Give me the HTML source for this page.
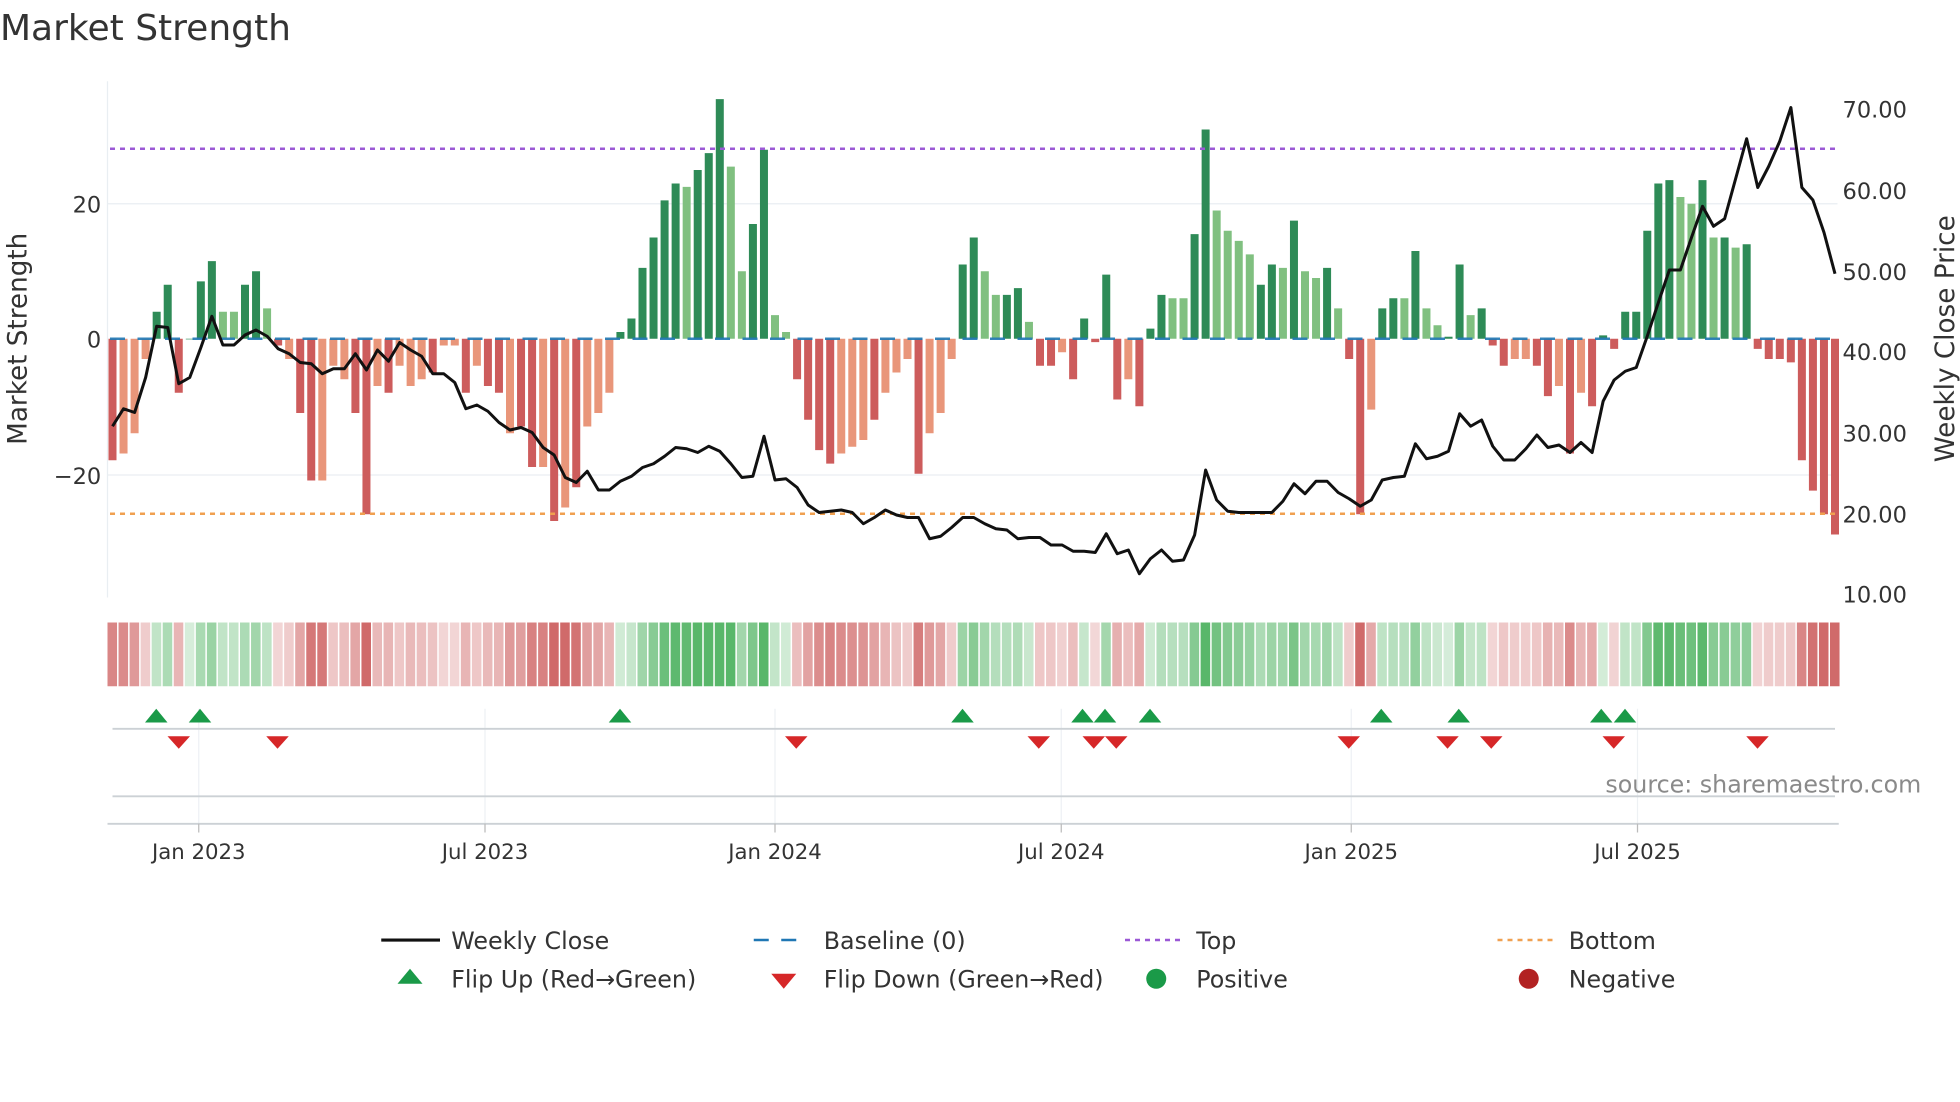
<!DOCTYPE html>
<html><head><meta charset="utf-8"><style>
html,body{margin:0;padding:0;background:#fff;width:1960px;height:1102px;overflow:hidden}
svg{display:block}
text{font-family:"DejaVu Sans","Liberation Sans",sans-serif;fill:#333}
</style></head><body>
<svg id="s" width="1960" height="1102" viewBox="0 0 1568 881.6" xmlns="http://www.w3.org/2000/svg">
<text x="0" y="32" font-size="28.8">Market Strength</text>
<g stroke="#e9eef2" stroke-width="1">
<line x1="86" y1="163" x2="1470" y2="163"/><line x1="86" y1="380" x2="1470" y2="380"/>
<line x1="86" y1="65" x2="86" y2="478"/>
</g>
<g stroke="#eef1f4" stroke-width="1">
<line x1="159" y1="567" x2="159" y2="659"/><line x1="388" y1="567" x2="388" y2="659"/><line x1="620" y1="567" x2="620" y2="659"/><line x1="849" y1="567" x2="849" y2="659"/><line x1="1081" y1="567" x2="1081" y2="659"/><line x1="1310" y1="567" x2="1310" y2="659"/>
</g>
<g id="bars"></g>
<line x1="88" y1="271" x2="1470" y2="271" stroke="#1f77b4" stroke-width="2" stroke-dasharray="12 10" opacity="0.9"/>
<line x1="88" y1="119" x2="1470" y2="119" stroke="#9b59d6" stroke-width="2" stroke-dasharray="4 4"/>
<line x1="88" y1="411" x2="1470" y2="411" stroke="#f0a050" stroke-width="2" stroke-dasharray="4 4"/>
<polyline id="price" fill="none" stroke="#111" stroke-width="2.4" stroke-linejoin="round"/>
<g id="strip"></g>
<line x1="90" y1="583" x2="1468" y2="583" stroke="#ccd1d5" stroke-width="1.5"/>
<line x1="90" y1="637" x2="1468" y2="637" stroke="#ccd1d5" stroke-width="1.5"/>
<line x1="86" y1="659" x2="1471" y2="659" stroke="#ccd1d5" stroke-width="1.5"/>
<g stroke="#bbb" stroke-width="1"><line x1="159" y1="659" x2="159" y2="666"/><line x1="388" y1="659" x2="388" y2="666"/><line x1="620" y1="659" x2="620" y2="666"/><line x1="849" y1="659" x2="849" y2="666"/><line x1="1081" y1="659" x2="1081" y2="666"/><line x1="1310" y1="659" x2="1310" y2="666"/></g>
<g id="marks"></g>
<g font-size="17" text-anchor="middle">
<text x="159" y="687">Jan 2023</text><text x="388" y="687">Jul 2023</text><text x="620" y="687">Jan 2024</text><text x="849" y="687">Jul 2024</text><text x="1081" y="687">Jan 2025</text><text x="1310" y="687">Jul 2025</text>
</g>
<g font-size="18" text-anchor="end">
<text x="81" y="170">20</text><text x="81" y="278">0</text><text x="81" y="387">−20</text>
</g>
<g font-size="18">
<text x="1474" y="94">70.00</text><text x="1474" y="159">60.00</text><text x="1474" y="224">50.00</text><text x="1474" y="288">40.00</text><text x="1474" y="353">30.00</text><text x="1474" y="418">20.00</text><text x="1474" y="482">10.00</text>
</g>
<text transform="translate(21,271) rotate(-90)" font-size="21" text-anchor="middle">Market Strength</text>
<text transform="translate(1563,271) rotate(-90)" font-size="21" text-anchor="middle">Weekly Close Price</text>
<text x="1537" y="634" font-size="19" text-anchor="end" style="fill:#8a8a8a">source: sharemaestro.com</text>
<g font-size="19">
<line x1="305" y1="752" x2="352" y2="752" stroke="#111" stroke-width="2.5"/><text x="361" y="759">Weekly Close</text>
<line x1="603" y1="752" x2="645" y2="752" stroke="#1f77b4" stroke-width="2" stroke-dasharray="12 10"/><text x="659" y="759">Baseline (0)</text>
<line x1="900" y1="752" x2="945" y2="752" stroke="#9b59d6" stroke-width="2" stroke-dasharray="4 4"/><text x="957" y="759">Top</text>
<line x1="1198" y1="752" x2="1243" y2="752" stroke="#f0a050" stroke-width="2" stroke-dasharray="4 4"/><text x="1255" y="759">Bottom</text>
<polygon points="318,787 338,787 328,775" fill="#1a9a48"/><text x="361" y="790">Flip Up (Red→Green)</text>
<polygon points="617,779 637,779 627,791" fill="#d62728"/><text x="659" y="790">Flip Down (Green→Red)</text>
<circle cx="925" cy="783" r="8" fill="#1a9a48"/><text x="957" y="790">Positive</text>
<circle cx="1223" cy="783" r="8" fill="#b22222"/><text x="1255" y="790">Negative</text>
</g>
</svg>
<script>
var V=[-18,-17,-14,-3,4,8,-8,0,8.5,11.5,4,4,8,10,4.5,-1,-3,-11,-21,-21,-4,-6,-11,-26,-7,-8,-4,-7,-6,-5,-1,-1,-8,-4,-7,-8,-14,-13,-19,-19,-27,-25,-22,-13,-11,-8,1,3,10.5,15,20.5,23,22.5,25,27.5,35.5,25.5,10,17,28,3.5,1,-6,-12,-16.5,-18.5,-17,-16,-15,-12,-8,-5,-3,-20,-14,-11,-3,11,15,10,6.5,6.5,7.5,2.5,-4,-4,-2,-6,3,-0.5,9.5,-9,-6,-10,1.5,6.5,6,6,15.5,31,19,16,14.5,12.5,8,11,10.5,17.5,10,9,10.5,4.5,-3,-26,-10.5,4.5,6,6,13,4.5,2,0.3,11,3.5,4.5,-1,-4,-3,-3,-4,-8.5,-7,-17,-8,-10,0.5,-1.5,4,4,16,23,23.5,21,20,23.5,15,15,13.5,14,-1.5,-3,-3,-3.5,-18,-22.5,-26,-29];
var L=[0,1,1,1,0,0,0,0,0,0,1,1,0,0,1,0,1,0,0,1,1,1,0,0,1,0,1,1,1,0,1,1,0,1,0,0,1,0,0,1,0,1,0,1,1,1,0,0,0,0,0,0,1,0,0,0,1,1,0,0,1,1,0,0,0,0,1,1,1,0,1,1,1,0,1,1,1,0,0,1,1,0,0,1,0,0,1,0,0,0,0,0,1,0,0,0,1,1,0,0,1,1,1,1,0,0,1,0,1,1,0,1,0,0,1,0,0,1,0,1,1,0,0,1,0,0,0,1,1,0,0,1,0,1,0,0,0,0,0,0,0,0,1,1,0,1,0,1,0,0,0,0,0,0,0,0];
var P=[341,327,330,302,261,262,307,302,278,253,276,276,268,264,269,279,283,290,291,299,295,295,283,296,280,289,274,280,285,299,299,306,327,324,329,338,344,342,346,358,364,382,386,377,392,392,385,381,374,371,365,358,359,362,357,361,371,382,381,349,384,383,390,404,410,409,408,410,419,414,408,412,414,414,431,429,422,414,414,419,423,424,431,430,430,436,436,441,441,442,427,443,440,459,447,440,449,448,428,376,400,409,410,410,410,410,401,387,395,385,385,394,399,405,400,384,382,381,355,367,365,361,331,341,336,357,368,368,359,348,358,356,362,354,362,321,304,297,294,269,242,216,216,190,165,181,175,143,111,150,133,113,86,150,160,186,219];
var n=V.length,x0=90,x1=1468,st=(x1-x0)/(n-1),ns="http://www.w3.org/2000/svg";
function el(t,a,p){var e=document.createElementNS(ns,t);for(var k in a)e.setAttribute(k,a[k]);document.getElementById(p).appendChild(e);return e;}
var pts=[];
for(var i=0;i<n;i++){var x=x0+i*st,v=V[i],h=Math.abs(v)*5.4,lt=L[i];
 var c=v>=0?(lt?'#80c080':'#2e8b57'):(lt?'#e9967a':'#cd5c5c');
 el('rect',{x:x-3.2,y:v>=0?271-h:271,width:6.4,height:Math.max(h,0.5),fill:c},'bars');
 var a=Math.min(1,0.25+Math.abs(v)/32);
 var sc=v>=0?'rgba(60,170,80,'+(a*0.85)+')':'rgba(200,80,80,'+(a*0.85)+')';
 el('rect',{x:x-4,y:498,width:st-1.2,height:51,fill:sc},'strip');
 if(i<P.length)pts.push(x.toFixed(1)+','+P[i]);}
document.getElementById('price').setAttribute('points',pts.join(' '));
[125,160,496,770,866,884,920,1105,1167,1281,1300].forEach(function(x){el('polygon',{points:(x-9)+',578 '+(x+9)+',578 '+x+',567',fill:'#1a9a48'},'marks');});
[143,222,637,831,875,893,1079,1158,1193,1291,1406].forEach(function(x){el('polygon',{points:(x-9)+',589 '+(x+9)+',589 '+x+',599',fill:'#d62728'},'marks');});
</script>
</body></html>
